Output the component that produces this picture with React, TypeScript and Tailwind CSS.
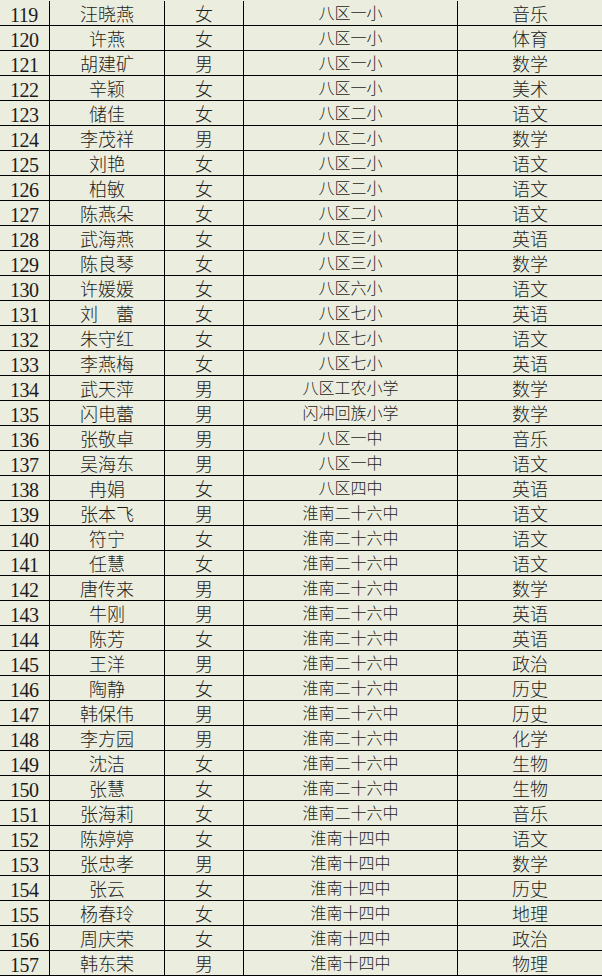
import React from "react";

const rows: [string, string, string, string, string][] = [
  ["119", "汪晓燕", "女", "八区一小", "音乐"],
  ["120", "许燕", "女", "八区一小", "体育"],
  ["121", "胡建矿", "男", "八区一小", "数学"],
  ["122", "辛颖", "女", "八区一小", "美术"],
  ["123", "储佳", "女", "八区二小", "语文"],
  ["124", "李茂祥", "男", "八区二小", "数学"],
  ["125", "刘艳", "女", "八区二小", "语文"],
  ["126", "柏敏", "女", "八区二小", "语文"],
  ["127", "陈燕朵", "女", "八区二小", "语文"],
  ["128", "武海燕", "女", "八区三小", "英语"],
  ["129", "陈良琴", "女", "八区三小", "数学"],
  ["130", "许媛媛", "女", "八区六小", "语文"],
  ["131", "刘\u3000蕾", "女", "八区七小", "英语"],
  ["132", "朱守红", "女", "八区七小", "语文"],
  ["133", "李燕梅", "女", "八区七小", "英语"],
  ["134", "武天萍", "男", "八区工农小学", "数学"],
  ["135", "闪电蕾", "男", "闪冲回族小学", "数学"],
  ["136", "张敬卓", "男", "八区一中", "音乐"],
  ["137", "吴海东", "男", "八区一中", "语文"],
  ["138", "冉娟", "女", "八区四中", "英语"],
  ["139", "张本飞", "男", "淮南二十六中", "语文"],
  ["140", "符宁", "女", "淮南二十六中", "语文"],
  ["141", "任慧", "女", "淮南二十六中", "语文"],
  ["142", "唐传来", "男", "淮南二十六中", "数学"],
  ["143", "牛刚", "男", "淮南二十六中", "英语"],
  ["144", "陈芳", "女", "淮南二十六中", "英语"],
  ["145", "王洋", "男", "淮南二十六中", "政治"],
  ["146", "陶静", "女", "淮南二十六中", "历史"],
  ["147", "韩保伟", "男", "淮南二十六中", "历史"],
  ["148", "李方园", "男", "淮南二十六中", "化学"],
  ["149", "沈洁", "女", "淮南二十六中", "生物"],
  ["150", "张慧", "女", "淮南二十六中", "生物"],
  ["151", "张海莉", "女", "淮南二十六中", "音乐"],
  ["152", "陈婷婷", "女", "淮南十四中", "语文"],
  ["153", "张忠孝", "男", "淮南十四中", "数学"],
  ["154", "张云", "女", "淮南十四中", "历史"],
  ["155", "杨春玲", "女", "淮南十四中", "地理"],
  ["156", "周庆荣", "女", "淮南十四中", "政治"],
  ["157", "韩东荣", "男", "淮南十四中", "物理"],
];

export default function App() {
  return (
    <div
      className="w-[602px] h-[976px] overflow-hidden bg-[#ebeedf] pt-px text-[#1c1c1c]"
      style={{ fontFamily: '"Liberation Serif", "Noto Sans CJK SC", serif' }}
    >
      {rows.map(([n, name, g, school, subj]) => (
        <div key={n} className="flex h-[25px] border-b border-black">
          <div className="w-[50px] border-r border-black pl-[10px] flex items-center pt-[3px] text-[20px] leading-none tracking-[-0.5px]">
            {n}
          </div>
          <div className="w-[115px] border-r border-black flex items-center justify-center pt-[3px] text-[18px] leading-none font-light">
            {name}
          </div>
          <div className="w-[79px] border-r border-black flex items-center justify-center pt-[3px] text-[18px] leading-none font-light">
            {g}
          </div>
          <div className="w-[214px] border-r border-black flex items-center justify-center pt-[2px] text-[16px] leading-none font-light">
            {school}
          </div>
          <div className="flex-1 flex items-center justify-center pt-[3px] text-[18px] leading-none font-light">
            {subj}
          </div>
        </div>
      ))}
    </div>
  );
}
